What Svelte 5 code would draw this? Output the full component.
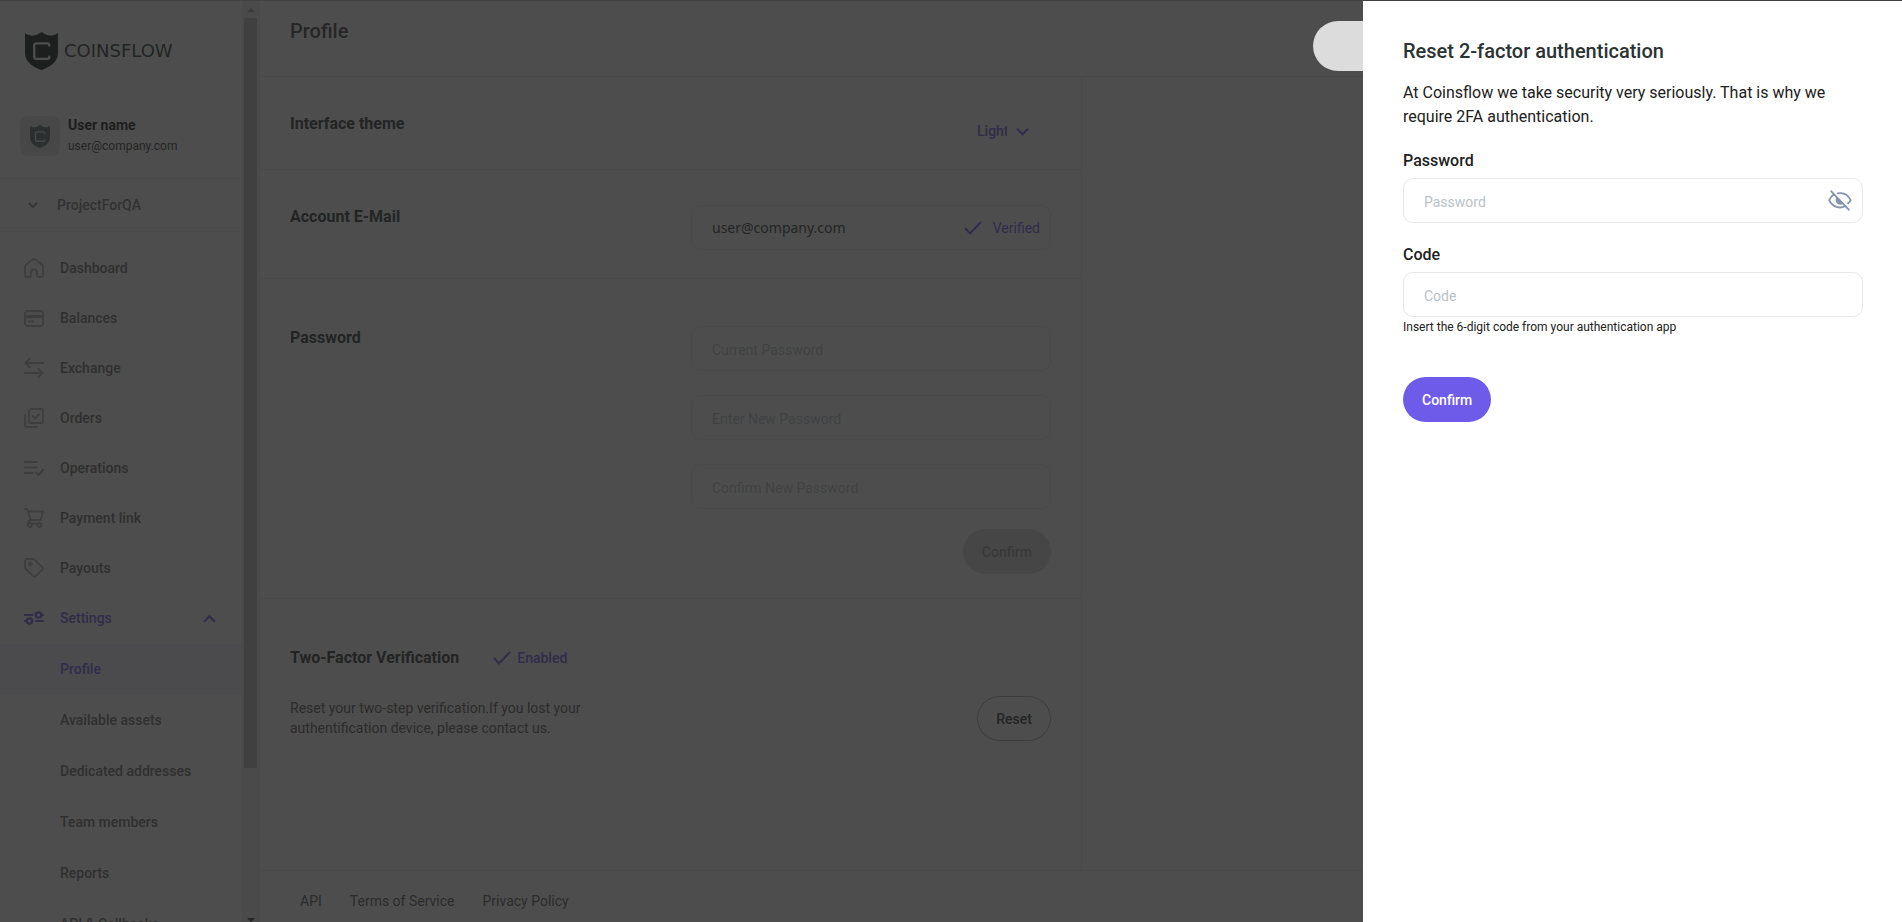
<script>
  const nav = [
    { label: 'Dashboard', icon: 'home' },
    { label: 'Balances', icon: 'card' },
    { label: 'Exchange', icon: 'exchange' },
    { label: 'Orders', icon: 'orders' },
    { label: 'Operations', icon: 'operations' },
    { label: 'Payment link', icon: 'cart' },
    { label: 'Payouts', icon: 'tag' },
  ];
  const settings = [
    'Profile',
    'Available assets',
    'Dedicated addresses',
    'Team members',
    'Reports',
    'API & Callbacks',
  ];
  const passwordFields = [
    { id: 'current', label: 'Current Password' },
    { id: 'new', label: 'Enter New Password' },
    { id: 'repeat', label: 'Confirm New Password' },
  ];
  const footerLinks = ['API', 'Terms of Service', 'Privacy Policy'];

  let theme = $state('Light');
  let email = $state('user@company.com');
  let settingsOpen = $state(true);
  let showPassword = $state(false);
  let password = $state('');
  let code = $state('');
</script>

{#snippet shield(size)}
  <svg class="shield" width={size} viewBox="0 0 32 37" fill="none">
    <path d="M0 1c4 3 9 3 12 1.500L16 0l4 2.500C23 4 28 4 32 1v19c0 8-6 13-16 17C6 33 0 28 0 20Z" fill="currentColor" />
    <path class="mark" d="M23.500 14v-1a2 2 0 0 0-2-2H11a2 2 0 0 0-2 2v11a2 2 0 0 0 2 2h10.500a2 2 0 0 0 2-2v-1" stroke-width="2.200" />
  </svg>
{/snippet}

{#snippet check()}
  <svg width="18" height="14" viewBox="0 0 18 14" fill="none" stroke="currentColor" stroke-width="2">
    <path d="M1 7l5 5.500L17 1" />
  </svg>
{/snippet}

{#snippet chevron(up, size)}
  <svg width={size} height={size} viewBox="0 0 12 12" fill="none" stroke="currentColor" stroke-width="2">
    <path d={up ? 'M1 9l5-5 5 5' : 'M1 3.500l5 5 5-5'} />
  </svg>
{/snippet}

{#snippet icon(name)}
  <svg width="20" height="20" viewBox="0 0 20 20" fill="none" stroke="currentColor" stroke-width="1.900" stroke-linecap="round" stroke-linejoin="round">
    {#if name === 'home'}
      <path d="M1 8.500Q1 7.500 2 6.700L8.500 1.600q1.500-1.100 3 0L18 6.700q1 .8 1 1.800V17q0 2-2 2h-2q-2 0-2-2v-2.500a3 3 0 0 0-6 0V17q0 2-2 2H3q-2 0-2-2Z" />
    {:else if name === 'card'}
      <rect x="1" y="3" width="18" height="15" rx="2.500" />
      <path d="M1 8.500h18" stroke-width="3.500" stroke-linecap="butt" />
      <path d="M5 13.500h4" />
    {:else if name === 'exchange'}
      <path d="M19 5H1.500M5.500 1l-4 4 4 4M1 15h17.500M14.500 11l4 4-4 4" stroke-width="2.200" />
    {:else if name === 'orders'}
      <rect x="5" y="1" width="14" height="14" rx="2" />
      <path d="M9 8l2.300 2.300L15 6.500M1 7v10q0 2 2 2h10" />
    {:else if name === 'operations'}
      <path d="M1 4h12M1 9.500h12M1 15h8M12 14.500l2.500 2.500L19 12" stroke-width="2.200" />
    {:else if name === 'cart'}
      <path d="M1 1h1.500q1 0 1.300 1L6.500 12h10.300L19 3.500H4.500M6.500 12q-2.500.5-2 3.500" />
      <circle cx="6" cy="17" r="2" />
      <circle cx="15.500" cy="17" r="2" />
      <path d="M8 15.500h5.500" />
    {:else if name === 'tag'}
      <path d="M1 3q0-2 2-2h6q1 0 1.800.8l7.400 7.400q1.200 1.200 0 2.400l-6.600 6.600q-1.200 1.200-2.400 0L1.800 11Q1 10.200 1 9.200Z" />
      <circle cx="6.300" cy="6" r="1.500" fill="currentColor" />
    {:else if name === 'settings'}
      <g stroke-width="2.200">
        <path d="M1 7h7.500M1 13h1M12 13h7M18 7h1" />
        <circle cx="5.500" cy="13" r="2.700" />
        <circle cx="14.500" cy="7" r="2.700" />
      </g>
    {/if}
  </svg>
{/snippet}

<div class="page">
  <aside>
    <div class="brand">
      {@render shield(33)}
      <span>COINSFLOW</span>
    </div>
    <div class="user">
      <div class="avatar">{@render shield(20)}</div>
      <div>
        <strong>User name</strong>
        <small>user@company.com</small>
      </div>
    </div>
    <button class="project">
      {@render chevron(false, 10)}
      ProjectForQA
    </button>
    <nav>
      {#each nav as item (item.label)}
        <a class="item" href="#{item.icon}">{@render icon(item.icon)}{item.label}</a>
      {/each}
      <button class="item active" onclick={() => (settingsOpen = !settingsOpen)}>
        {@render icon('settings')}Settings
        <span class="caret">{@render chevron(settingsOpen, 13)}</span>
      </button>
      {#if settingsOpen}
        {#each settings as label, i (label)}
          <a class="sub" class:active={i === 0} href="#settings">{label}</a>
        {/each}
      {/if}
    </nav>
  </aside>

  <div class="scrollbar">
    <svg width="8" height="4" viewBox="0 0 8 4"><path d="M0 4l4-4 4 4Z" fill="#a0a0a0" /></svg>
    <div class="thumb"></div>
    <svg width="8" height="4" viewBox="0 0 8 4"><path d="M0 0l4 4 4-4Z" fill="#333" /></svg>
  </div>

  <main>
    <header><h1>Profile</h1></header>
    <div class="content">
      <section>
        <h2><label for="theme">Interface theme</label></h2>
        <div class="theme">
          <select id="theme" bind:value={theme}>
            <option>Light</option>
            <option>Dark</option>
          </select>
          {@render chevron(false, 13)}
        </div>
      </section>
      <section>
        <h2><label for="email">Account E-Mail</label></h2>
        <div class="field controls">
          <input id="email" class="email" type="email" bind:value={email} />
          <span class="status verified">{@render check()}Verified</span>
        </div>
      </section>
      <section class="tall">
        <h2>Password</h2>
        <form class="controls passwords" onsubmit={(e) => e.preventDefault()}>
          {#each passwordFields as f (f.id)}
            <div class="field">
              <input type="password" aria-label={f.label} placeholder={f.label} />
            </div>
          {/each}
          <button class="btn disabled" disabled>Confirm</button>
        </form>
      </section>
      <section class="tall">
        <div>
          <div class="title-row">
            <h2>Two-Factor Verification</h2>
            <span class="status">{@render check()}Enabled</span>
          </div>
          <p>Reset your two-step verification.If you lost your<br />authentification device, please contact us.</p>
        </div>
        <button class="btn outline">Reset</button>
      </section>
    </div>
    <footer>
      {#each footerLinks as link (link)}
        <a href="#footer">{link}</a>
      {/each}
    </footer>
  </main>
</div>

<div class="overlay"></div>
<div class="toggle"></div>

<form class="drawer" onsubmit={(e) => e.preventDefault()}>
  <h3>Reset 2-factor authentication</h3>
  <p>At Coinsflow we take security very seriously. That is why we require 2FA authentication.</p>
  <label for="password">Password</label>
  <div class="field">
    <input id="password" type={showPassword ? 'text' : 'password'} placeholder="Password" bind:value={password} />
    <button type="button" class="eye" aria-label="Show password" onclick={() => (showPassword = !showPassword)}>
      <svg width="24" height="21" viewBox="0 0 26 22" fill="none" stroke="currentColor" stroke-width="2" stroke-linecap="round">
        <path d="M10.500 3.300C17 2 22 5.500 24.500 10.500q-1 2-2.800 3.700M6 4.800Q3 7 1.300 10.500C5 18 12.500 20.500 19 17" />
        <path d="M10 8.500a4 4 0 0 0 5.500 5.500Z" fill="currentColor" />
        <path d="M3.500 1l19 20" />
      </svg>
    </button>
  </div>
  <label for="code">Code</label>
  <div class="field">
    <input id="code" type="text" placeholder="Code" aria-describedby="code-hint" bind:value={code} />
  </div>
  <small id="code-hint">Insert the 6-digit code from your authentication app</small>
  <button class="btn primary">Confirm</button>
</form>

<style>
  :global(body) {
    margin: 0;
    font-family: Roboto, sans-serif;
    font-size: 14px;
    line-height: 20px;
    color: #2c3333;
    background: #fff;
    overflow: hidden;
  }

  .page, .page *, .drawer, .drawer * { box-sizing: border-box; }
  h1, h2, h3, p { margin: 0; }
  a { color: inherit; text-decoration: none; }
  svg { display: block; flex: none; }
  button, input, select { font: inherit; color: inherit; }
  button { cursor: pointer; }

  .page {
    display: flex;
    height: 100vh;
    border-top: 1px solid #c8c8c8;
  }

  /* sidebar */
  aside {
    width: 242px;
    flex: none;
    overflow: hidden;
    font-weight: 500;
  }
  .shield { color: #0f1614; }
  .mark { stroke: #fff; }
  .brand {
    display: flex;
    align-items: center;
    gap: 6px;
    padding: 31px 25px 0;
    color: #2c3333;
    font: 18px/38px "DejaVu Sans", sans-serif;
  }
  .user {
    display: flex;
    align-items: center;
    gap: 8px;
    padding: 45px 20px 21px;
    border-bottom: 1px solid #e8e8e8;
  }
  .user strong, .user small { display: block; line-height: 21px; }
  .user strong { font-weight: 700; color: #111; }
  .user small { font-size: 12px; font-weight: 400; color: #333; }
  .avatar {
    display: grid;
    place-items: center;
    width: 40px;
    height: 40px;
    border-radius: 8px;
    background: #e0e0e0;
  }
  .avatar .shield { color: #5d6b6e; }
  .avatar .mark { stroke: #e0e0e0; }
  .project {
    display: flex;
    align-items: center;
    gap: 19px;
    width: 100%;
    height: 53px;
    padding: 0 28px;
    border: 0;
    border-bottom: 1px solid #e8e8e8;
    background: none;
    color: #777;
    font-weight: 500;
  }
  nav { padding-top: 11px; }
  .item {
    display: flex;
    align-items: center;
    gap: 16px;
    width: 100%;
    height: 50px;
    padding: 0 26px 0 24px;
    border: 0;
    background: none;
    color: #6c6c6c;
    font-weight: 500;
  }
  .item svg { color: #b4b4b4; }
  .item.active, .item.active svg, .sub.active { color: #6f5bea; }
  .item.active { margin-bottom: 1px; }
  .caret { margin-left: auto; }
  .sub {
    display: block;
    padding-left: 60px;
    line-height: 51px;
    color: #6c6c6c;
  }
  .sub.active { background: #f4f4fe; }

  .scrollbar {
    display: flex;
    flex-direction: column;
    align-items: center;
    gap: 6px;
    flex: none;
    width: 18px;
    padding: 7px 1px 0 0;
    background: #f0f0f0;
  }
  .thumb { width: 13px; height: 750px; background: #bdbdbd; }
  .scrollbar svg:last-child { margin-top: auto; }

  /* main */
  main {
    display: flex;
    flex-direction: column;
    flex: 1;
    min-width: 0;
  }
  header {
    padding: 18px 30px 33px;
    border-bottom: 1px solid #e8e8e8;
  }
  h1 { font-size: 20px; line-height: 24px; font-weight: 500; color: #3c3c3c; }
  .content {
    flex: 1;
    width: calc(50% + 1px);
    border-right: 1px solid #e8e8e8;
  }
  section {
    display: flex;
    justify-content: space-between;
    align-items: flex-start;
    padding: 35px 30px 28px;
    border-bottom: 1px solid #e8e8e8;
  }
  section.tall { padding: 47px 30px 24px; }
  section:last-child { border-bottom: 0; }
  h2 { font-size: 16px; line-height: 24px; font-weight: 700; }
  .theme {
    display: flex;
    align-items: center;
    gap: 9px;
    padding: 9px 22px 0 0;
    color: #6f5bea;
    font-weight: 500;
  }
  select {
    appearance: none;
    padding: 0;
    border: 0;
    background: none;
    width: 30px;
    text-overflow: clip;
  }
  .controls { width: 360px; }
  .passwords {
    display: flex;
    flex-direction: column;
    gap: 24px;
  }
  .passwords .btn { align-self: flex-end; margin-top: -4px; }
  .field {
    display: flex;
    align-items: center;
    height: 45px;
    padding: 0 10px 0 20px;
    border: 1px solid #e8e8e8;
    border-radius: 10px;
    background: #fff;
  }
  .field input {
    flex: 1;
    min-width: 0;
    padding: 2px 0 0;
    border: 0;
    outline: 0;
    background: none;
  }
  .field input::placeholder { color: #b9c3c8; opacity: 1; }
  .field .email { padding: 0; font-family: "Noto Sans", sans-serif; }
  .status {
    display: flex;
    align-items: center;
    gap: 6px;
    color: #6f5bea;
    font-weight: 500;
  }
  .verified { gap: 11px; font-weight: 400; }
  .title-row { display: flex; gap: 34px; }
  section p { margin-top: 28px; color: #555; }

  .btn {
    height: 45px;
    padding: 0 18px;
    border: 1px solid transparent;
    border-radius: 23px;
    font-weight: 500;
  }
  .disabled { background: #d9d9d9; color: #999; }
  .outline { margin-top: 50px; background: #fff; border-color: #a8a8a8; }
  .primary { background: #6f5bea; color: #fff; }

  footer {
    display: flex;
    gap: 28px;
    padding: 20px 40px 11px;
    border-top: 1px solid #e8e8e8;
    color: #555;
  }

  /* modal layer */
  .overlay {
    position: fixed;
    inset: 0;
    background: rgba(33, 33, 33, .8);
  }
  .toggle {
    position: fixed;
    top: 21px;
    right: 489px;
    width: 100px;
    height: 50px;
    border-radius: 25px;
    background: #dcdcdc;
  }
  .drawer {
    position: fixed;
    top: 1px;
    right: 0;
    bottom: 0;
    display: flex;
    flex-direction: column;
    width: 539px;
    padding: 38px 39px 0 40px;
    background: #fff;
    color: #212121;
  }
  h3 { font-size: 20px; line-height: 24px; font-weight: 500; color: #2c3333; }
  .drawer p { margin-top: 18px; font-size: 16px; line-height: 24px; }
  .drawer label {
    margin-top: 20px;
    padding-bottom: 5px;
    font-size: 16px;
    line-height: 24px;
    font-weight: 500;
  }
  .drawer small { margin-top: 2px; font-size: 12px; line-height: 16px; }
  .eye { padding: 0; border: 0; background: none; color: #8593ab; }
  .primary { align-self: flex-start; margin-top: 42px; }
</style>
